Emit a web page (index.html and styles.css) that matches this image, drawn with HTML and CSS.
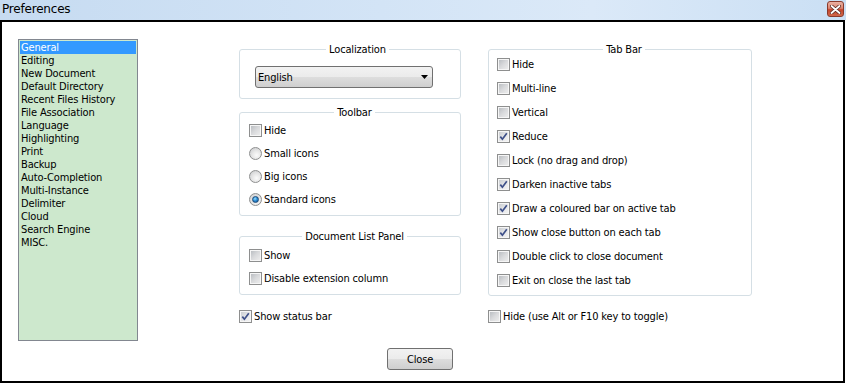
FILE: index.html
```html
<!DOCTYPE html>
<html>
<head>
<meta charset="utf-8">
<title>Preferences</title>
<link rel="stylesheet" href="styles.css">
</head>
<body>
<div class="window">
  <div class="titlebar">
    <span class="title">Preferences</span>
    <span class="close-x">
      <svg width="11" height="9" viewBox="0 0 11 9"><path d="M1.5 1 L9.5 8 M9.5 1 L1.5 8" stroke="#5a2a22" stroke-width="3.4" stroke-linecap="round"/><path d="M1.5 1 L9.5 8 M9.5 1 L1.5 8" stroke="#fff" stroke-width="1.8" stroke-linecap="round"/></svg>
    </span>
  </div>
  <div class="frame">
    <div class="main">
      <ul class="list">
        <li class="sel">General</li>
        <li>Editing</li>
        <li>New Document</li>
        <li>Default Directory</li>
        <li>Recent Files History</li>
        <li>File Association</li>
        <li>Language</li>
        <li>Highlighting</li>
        <li>Print</li>
        <li>Backup</li>
        <li>Auto-Completion</li>
        <li>Multi-Instance</li>
        <li>Delimiter</li>
        <li>Cloud</li>
        <li>Search Engine</li>
        <li>MISC.</li>
      </ul>
      <div class="col mid">
        <fieldset class="group loc">
          <legend>Localization</legend>
          <div class="select"><span>English</span><svg width="7" height="4" viewBox="0 0 7 4"><path d="M0 0 H7 L3.5 4 Z" fill="#000"/></svg></div>
        </fieldset>
        <fieldset class="group toolbar">
          <legend>Toolbar</legend>
          <div class="opt"><span class="cb"></span>Hide</div>
          <div class="opt"><span class="rb"></span>Small icons</div>
          <div class="opt"><span class="rb"></span>Big icons</div>
          <div class="opt"><span class="rb on"></span>Standard icons</div>
        </fieldset>
        <fieldset class="group doclist">
          <legend>Document List Panel</legend>
          <div class="opt"><span class="cb"></span>Show</div>
          <div class="opt"><span class="cb"></span>Disable extension column</div>
        </fieldset>
        <div class="opt solo"><span class="cb on"><svg width="9" height="9" viewBox="0 0 9 9"><path d="M1.3 4.6 L3.4 7.2 L7.8 1.2" fill="none" stroke="#3e5089" stroke-width="1.7"/></svg></span>Show status bar</div>
      </div>
      <div class="col right">
        <fieldset class="group tabbar">
          <legend>Tab Bar</legend>
          <div class="opt"><span class="cb"></span>Hide</div>
          <div class="opt"><span class="cb"></span>Multi-line</div>
          <div class="opt"><span class="cb"></span>Vertical</div>
          <div class="opt"><span class="cb on"><svg width="9" height="9" viewBox="0 0 9 9"><path d="M1.3 4.6 L3.4 7.2 L7.8 1.2" fill="none" stroke="#3e5089" stroke-width="1.7"/></svg></span>Reduce</div>
          <div class="opt"><span class="cb"></span>Lock (no drag and drop)</div>
          <div class="opt"><span class="cb on"><svg width="9" height="9" viewBox="0 0 9 9"><path d="M1.3 4.6 L3.4 7.2 L7.8 1.2" fill="none" stroke="#3e5089" stroke-width="1.7"/></svg></span>Darken inactive tabs</div>
          <div class="opt"><span class="cb on"><svg width="9" height="9" viewBox="0 0 9 9"><path d="M1.3 4.6 L3.4 7.2 L7.8 1.2" fill="none" stroke="#3e5089" stroke-width="1.7"/></svg></span>Draw a coloured bar on active tab</div>
          <div class="opt"><span class="cb on"><svg width="9" height="9" viewBox="0 0 9 9"><path d="M1.3 4.6 L3.4 7.2 L7.8 1.2" fill="none" stroke="#3e5089" stroke-width="1.7"/></svg></span>Show close button on each tab</div>
          <div class="opt"><span class="cb"></span>Double click to close document</div>
          <div class="opt"><span class="cb"></span>Exit on close the last tab</div>
        </fieldset>
        <div class="opt solo"><span class="cb"></span>Hide (use Alt or F10 key to toggle)</div>
      </div>
    </div>
    <div class="actions"><button class="btn">Close</button></div>
  </div>
</div>
</body>
</html>
```
FILE: styles.css
```css
body {
  margin: 0;
  font-family: "DejaVu Sans Condensed", "Liberation Sans", sans-serif;
  font-size: 11px;
  letter-spacing: -0.15px;
  color: #000;
  background: #fff;
}

.window {
  width: 846px;
  height: 384px;
  background: #fff;
  display: flex;
  flex-direction: column;
}

.titlebar {
  height: 20px;
  display: flex;
  justify-content: space-between;
  align-items: flex-start;
  background: linear-gradient(to right, #c6dbf1 0%, #d3e4f6 45%, #dbe9f8 70%, #cadff4 100%);
}

.title {
  font-family: "DejaVu Sans", sans-serif;
  font-size: 12px;
  letter-spacing: -0.2px;
  line-height: 16px;
  margin: 1px 0 0 2px;
  color: #000;
}

.close-x {
  width: 17px;
  height: 16px;
  margin: 1px 2px 0 0;
  box-sizing: border-box;
  border: 1px solid #8a3a2c;
  border-radius: 3px;
  background: linear-gradient(to bottom, #eab1a2 0%, #dc8470 45%, #c4452d 55%, #d0674a 100%);
  display: flex;
  align-items: center;
  justify-content: center;
}

.frame {
  width: 845px;
  height: 363px;
  box-sizing: border-box;
  border: 2px solid #000;
  padding: 17px 0 0 16px;
}

.main {
  display: flex;
  align-items: flex-start;
}

.list {
  list-style: none;
  margin: 0 101px 0 0;
  padding: 1px;
  width: 120px;
  height: 302px;
  box-sizing: border-box;
  border: 1px solid #828790;
  background: #cde8cd;
}

.list li {
  height: 13px;
  line-height: 13px;
  padding-left: 1px;
  white-space: nowrap;
}

.list li.sel {
  background: #3399ff;
  color: #fff;
}

.col {
  display: flex;
  flex-direction: column;
  padding-top: 4px;
}

.mid {
  width: 222px;
}

.right {
  width: 264px;
  margin-left: 27px;
}

.group {
  margin: 0;
  min-width: 0;
  border: 1px solid #d5dfe5;
  border-radius: 3px;
}

.group legend {
  margin: 0 auto;
  padding: 0 3px;
  line-height: 13px;
  height: 13px;
}

.loc {
  padding: 10px 0 10px 15px;
}

.select {
  width: 178px;
  height: 22px;
  box-sizing: border-box;
  border: 1px solid #707070;
  border-radius: 3px;
  background: linear-gradient(to bottom, #f2f2f2 0%, #ebebeb 50%, #dddddd 51%, #cfcfcf 100%);
  display: flex;
  align-items: center;
  justify-content: space-between;
  padding: 0 4px 0 2px;
}

.toolbar {
  margin-top: 7px;
  padding: 4px 0 9px 9px;
}

.toolbar .opt + .opt {
  margin-top: 9px;
}

.doclist {
  margin-top: 14px;
  padding: 5px 0 8px 9px;
}

.doclist .opt + .opt {
  margin-top: 9.5px;
}

.tabbar {
  padding: 1px 0 8px 8px;
}

.tabbar .opt + .opt {
  margin-top: 10px;
}

.opt {
  display: flex;
  align-items: center;
  height: 14px;
  white-space: nowrap;
}

.solo {
  margin-top: 15px;
}

.right .solo {
  margin-top: 13px;
}

.cb {
  width: 13px;
  height: 13px;
  box-sizing: border-box;
  border: 1px solid #8e8f8f;
  background: linear-gradient(135deg, #b4b8bd 0%, #d9dadc 50%, #f0f0f0 100%);
  box-shadow: inset 0 0 0 1px #f6f6f6;
  margin-right: 2px;
  flex: none;
  display: flex;
  align-items: center;
  justify-content: center;
}

.cb.on {
  background: linear-gradient(135deg, #c4c8cd 0%, #e4e5e7 50%, #f6f6f6 100%);
}

.rb {
  width: 13px;
  height: 13px;
  box-sizing: border-box;
  border: 1px solid #8e8f8f;
  border-radius: 50%;
  background: radial-gradient(circle at 60% 65%, #fbfbfb 0%, #e6e6e6 45%, #c4c6c9 100%);
  margin-right: 2px;
  flex: none;
  display: flex;
  align-items: center;
  justify-content: center;
}

.rb.on::after {
  content: "";
  width: 7px;
  height: 7px;
  border-radius: 50%;
  box-sizing: border-box;
  border: 1px solid #1c4a78;
  background: radial-gradient(circle at 40% 35%, #9be0ff 0%, #2f8fd6 45%, #0c4c8c 100%);
}

.actions {
  padding: 7px 0 0 369px;
}

.btn {
  width: 66px;
  height: 22px;
  box-sizing: border-box;
  border: 1px solid #707070;
  border-radius: 3px;
  background: linear-gradient(to bottom, #f2f2f2 0%, #ebebeb 50%, #dddddd 51%, #cfcfcf 100%);
  font-family: inherit;
  font-size: 11px;
  letter-spacing: -0.15px;
  color: #000;
  padding: 0;
  margin: 0;
}
```
